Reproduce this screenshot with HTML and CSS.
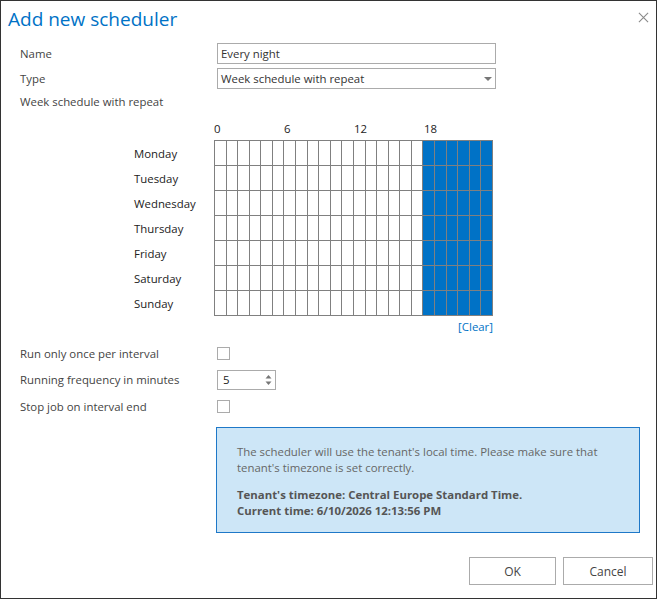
FILE: index.html
```html
<!DOCTYPE html>
<html lang="en">
<head>
    <meta charset="UTF-8">
    <title>Add new scheduler</title>
    <link rel="stylesheet" href="styles.css">
</head>
<body>
    <div class="dialog">
        <div class="dialog-header">
            <h1 class="dialog-title">Add new scheduler</h1>
            <button class="close-btn" title="Close">
                <svg viewBox="0 0 12 12" width="11" height="11" stroke="#8a8a8a" stroke-width="1.2">
                    <path d="M1 1L11 11M11 1L1 11"></path>
                </svg>
            </button>
        </div>

        <div class="dialog-body">
            <div class="form-row">
                <label class="form-label">Name</label>
                <input class="text-input" type="text" value="Every night">
            </div>
            <div class="form-row">
                <label class="form-label">Type</label>
                <div class="select-box">
                    <span>Week schedule with repeat</span>
                    <span class="select-arrow"></span>
                </div>
            </div>
            <div class="section-label">Week schedule with repeat</div>

            <div class="week">
                <div class="hours">
                    <span>0</span>
                    <span>6</span>
                    <span>12</span>
                    <span>18</span>
                </div>
                <div class="week-body">
                    <div class="days">
                        <div>Monday</div>
                        <div>Tuesday</div>
                        <div>Wednesday</div>
                        <div>Thursday</div>
                        <div>Friday</div>
                        <div>Saturday</div>
                        <div>Sunday</div>
                    </div>
                    <div class="week-grid" id="week-grid"></div>
                </div>
                <div class="clear-row"><a class="clear-link" href="#">[Clear]</a></div>
            </div>

            <div class="options">
                <div class="form-row option-row">
                    <label class="form-label">Run only once per interval</label>
                    <span class="checkbox"></span>
                </div>
                <div class="form-row option-row">
                    <label class="form-label">Running frequency in minutes</label>
                    <div class="number-input">
                        <span>5</span>
                        <span class="spinner">
                            <svg viewBox="0 0 7 12" width="7" height="12">
                                <path d="M3.5 1L6.5 4.5H0.5Z" fill="#777"></path>
                                <path d="M3.5 11L6.5 7.5H0.5Z" fill="#777"></path>
                            </svg>
                        </span>
                    </div>
                </div>
                <div class="form-row option-row">
                    <label class="form-label">Stop job on interval end</label>
                    <span class="checkbox"></span>
                </div>
            </div>

            <div class="info-box">
                <p>The scheduler will use the tenant's local time. Please make sure that tenant's timezone is set correctly.</p>
                <p class="info-strong">Tenant's timezone: Central Europe Standard Time.<br>Current time: 6/10/2026 12:13:56 PM</p>
            </div>
        </div>

        <div class="dialog-footer">
            <button class="btn">OK</button>
            <button class="btn btn-cancel">Cancel</button>
        </div>
    </div>

    <script>
        // Build the 7 x 24 hour grid, hours 18-23 selected
        const grid = document.getElementById('week-grid');
        for (let day = 0; day < 7; day++) {
            for (let hour = 0; hour < 24; hour++) {
                const cell = document.createElement('div');
                cell.className = hour >= 18 ? 'cell selected' : 'cell';
                grid.appendChild(cell);
            }
        }
    </script>
</body>
</html>
```

FILE: styles.css
```css
* {
    margin: 0;
    padding: 0;
    box-sizing: border-box;
}

body {
    width: 657px;
    height: 599px;
    background-color: #fff;
    font-family: "Open Sans", Arial, sans-serif;
    font-size: 11.4px;
    color: #444;
}

.dialog {
    width: 657px;
    height: 599px;
    border: 1px solid #333;
    display: flex;
    flex-direction: column;
}

.dialog-header {
    display: flex;
    justify-content: space-between;
    align-items: flex-start;
    padding: 4px 8px 0 7px;
    height: 42px;
}

.dialog-title {
    font-size: 19px;
    font-weight: normal;
    color: #0072c6;
    line-height: 28px;
}

.close-btn {
    background: none;
    border: none;
    margin-top: 6px;
    margin-right: -1px;
    cursor: pointer;
}

.dialog-body {
    padding: 0 0 0 19px;
    flex: 1;
}

.form-row {
    display: flex;
    align-items: center;
    height: 21px;
    margin-bottom: 4px;
}

.form-label {
    width: 197px;
}

.text-input,
.select-box {
    width: 279px;
    height: 21px;
    border: 1px solid #ababab;
    padding: 0 3px;
    font-family: inherit;
    font-size: 11.4px;
    color: #333;
    outline: none;
}

.select-box {
    display: flex;
    align-items: center;
    justify-content: space-between;
}

.select-arrow {
    width: 0;
    height: 0;
    border-left: 4px solid transparent;
    border-right: 4px solid transparent;
    border-top: 4px solid #777;
}

.section-label {
    height: 20px;
    line-height: 18px;
}

.week {
    padding-left: 114px;
    width: 473px;
}

.hours {
    position: relative;
    height: 27px;
    margin-left: 80px;
    color: #222;
}

.hours span {
    position: absolute;
    top: 8px;
}

.hours span:nth-child(1) { left: 0; }
.hours span:nth-child(2) { left: 70px; }
.hours span:nth-child(3) { left: 140px; }
.hours span:nth-child(4) { left: 210px; }

.week-body {
    display: flex;
}

.days {
    width: 80px;
    padding-top: 1px;
    color: #222;
}

.days div {
    height: 25px;
    line-height: 25px;
}

.week-grid {
    display: grid;
    grid-template-columns: repeat(24, 1fr);
    grid-auto-rows: 24px;
    gap: 1px;
    padding: 1px;
    width: 279px;
    background-color: #808080;
}

.cell {
    background-color: #fff;
}

.cell.selected {
    background-color: #0072c6;
}

.clear-row {
    text-align: right;
    height: 22px;
    line-height: 22px;
}

.clear-link {
    color: #0072c6;
    text-decoration: none;
}

.options {
    padding-top: 4px;
}

.option-row {
    height: 22px;
    margin-bottom: 4.5px;
}

.checkbox {
    width: 13px;
    height: 13px;
    border: 1px solid #ababab;
}

.number-input {
    width: 59px;
    height: 20px;
    border: 1px solid #ababab;
    display: flex;
    align-items: center;
    justify-content: space-between;
    padding: 0 3px 0 5px;
    color: #222;
}

.spinner {
    display: flex;
}

.info-box {
    margin: 10px 0 0 196px;
    width: 424px;
    height: 106px;
    background-color: #cde6f7;
    border: 1px solid #1e78c8;
    padding: 16px 20px 14px;
    color: #666;
    line-height: 16px;
}

.info-box p + p {
    margin-top: 11px;
}

.info-strong {
    font-weight: bold;
    color: #555;
}

.dialog-footer {
    display: flex;
    justify-content: flex-end;
    gap: 7px;
    padding: 0 3px 13px 0;
}

.btn {
    width: 87px;
    height: 28px;
    background-color: #fff;
    border: 1px solid #ababab;
    font-family: inherit;
    font-size: 12px;
    color: #444;
}

.btn-cancel {
    width: 90px;
}
```
